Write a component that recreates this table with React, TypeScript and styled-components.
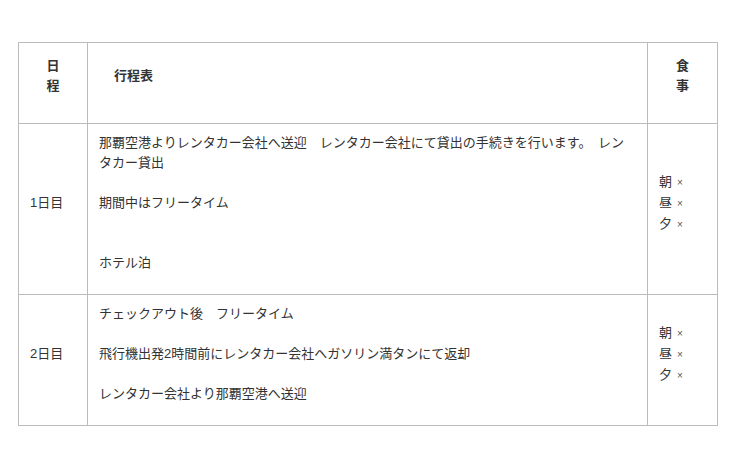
import styled, { createGlobalStyle } from "styled-components";

const GlobalStyle = createGlobalStyle`
  body {
    margin: 0;
    background: #fff;
    font-family: "Liberation Sans", "Noto Sans CJK JP", sans-serif;
    color: #333;
  }
`;

const Page = styled.div`
  padding: 42px 22px 0 18px;
`;

const Table = styled.table`
  width: 700px;
  border-collapse: collapse;
  table-layout: fixed;
  font-size: 13px;
  line-height: 20px;
`;

const HeadCell = styled.th<{ $align?: "left" | "center" }>`
  border: 1px solid #bbb;
  padding: 13px 10px 27px ${(p) => (p.$align === "left" ? "26px" : "10px")};
  text-align: ${(p) => p.$align ?? "center"};
  vertical-align: middle;
  font-weight: bold;
  color: #333;
`;

const Cell = styled.td`
  border: 1px solid #bbb;
  padding: 9px 16px 21px 11px;
  vertical-align: middle;
`;

const Meal = styled.div`
  display: flex;
  align-items: baseline;
  gap: 5px;
`;

const Mark = styled.span`
  font-size: 10px;
  color: #555;
`;

type Day = {
  label: string;
  lines: string[];
};

const days: Day[] = [
  {
    label: "1日目",
    lines: [
      "那覇空港よりレンタカー会社へ送迎　レンタカー会社にて貸出の手続きを行います。　レンタカー貸出",
      "",
      "期間中はフリータイム",
      "",
      "",
      "ホテル泊",
    ],
  },
  {
    label: "2日目",
    lines: [
      "チェックアウト後　フリータイム",
      "",
      "飛行機出発2時間前にレンタカー会社へガソリン満タンにて返却",
      "",
      "レンタカー会社より那覇空港へ送迎",
    ],
  },
];

const meals = ["朝", "昼", "夕"];

export default function App() {
  return (
    <Page>
      <GlobalStyle />
      <Table>
        <colgroup>
          <col style={{ width: 69 }} />
          <col />
          <col style={{ width: 70 }} />
        </colgroup>
        <thead>
          <tr>
            <HeadCell>
              日<br />程
            </HeadCell>
            <HeadCell $align="left">行程表</HeadCell>
            <HeadCell>
              食<br />事
            </HeadCell>
          </tr>
        </thead>
        <tbody>
          {days.map((d) => (
            <tr key={d.label}>
              <Cell>{d.label}</Cell>
              <Cell>
                {d.lines.map((l, i) => (
                  <div key={i}>{l || "\u00a0"}</div>
                ))}
              </Cell>
              <Cell>
                {meals.map((m) => (
                  <Meal key={m}>
                    {m}
                    <Mark>×</Mark>
                  </Meal>
                ))}
              </Cell>
            </tr>
          ))}
        </tbody>
      </Table>
    </Page>
  );
}
